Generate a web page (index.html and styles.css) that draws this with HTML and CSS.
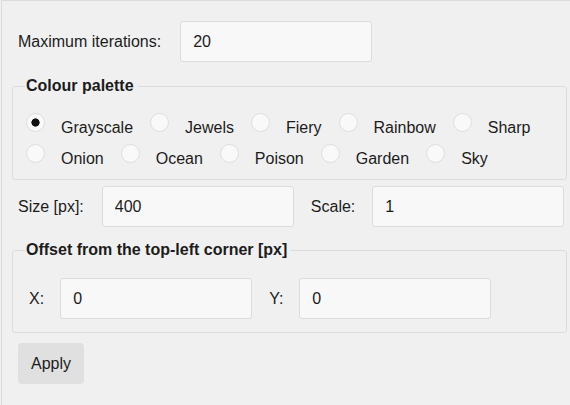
FILE: index.html
```html
<!DOCTYPE html>
<html lang="en">
<head>
<meta charset="utf-8">
<title>Fractal settings</title>
<link rel="stylesheet" href="styles.css">
</head>
<body>
<div class="app">
  <div class="row">
    <label class="lbl lbl-iter" for="iter">Maximum iterations:</label>
    <input id="iter" class="field" type="text" value="20">
  </div>

  <fieldset class="group palette">
    <legend>Colour palette</legend>
    <div class="radio-row">
      <label class="opt"><input type="radio" name="pal" checked><span>Grayscale</span></label>
      <label class="opt"><input type="radio" name="pal"><span>Jewels</span></label>
      <label class="opt"><input type="radio" name="pal"><span>Fiery</span></label>
      <label class="opt"><input type="radio" name="pal"><span>Rainbow</span></label>
      <label class="opt"><input type="radio" name="pal"><span>Sharp</span></label>
    </div>
    <div class="radio-row">
      <label class="opt"><input type="radio" name="pal"><span>Onion</span></label>
      <label class="opt"><input type="radio" name="pal"><span>Ocean</span></label>
      <label class="opt"><input type="radio" name="pal"><span>Poison</span></label>
      <label class="opt"><input type="radio" name="pal"><span>Garden</span></label>
      <label class="opt"><input type="radio" name="pal"><span>Sky</span></label>
    </div>
  </fieldset>

  <div class="row row-size">
    <label class="lbl lbl-size" for="size">Size [px]:</label>
    <input id="size" class="field" type="text" value="400">
    <label class="lbl lbl-next" for="scale">Scale:</label>
    <input id="scale" class="field" type="text" value="1">
  </div>

  <fieldset class="group offset">
    <legend>Offset from the top-left corner [px]</legend>
    <div class="row row-offset">
      <label class="lbl" for="ox">X:</label>
      <input id="ox" class="field" type="text" value="0">
      <label class="lbl lbl-next" for="oy">Y:</label>
      <input id="oy" class="field" type="text" value="0">
    </div>
  </fieldset>

  <button class="apply" type="button">Apply</button>
</div>
</body>
</html>
```

FILE: styles.css
```css
html, body {
  margin: 0;
  background: #f0f0f0;
}

body {
  font-family: "Liberation Sans", Arial, Helvetica, sans-serif;
  font-size: 16px;
  color: #1c1c1c;
}

.app {
  box-sizing: border-box;
  min-height: 405px;
  margin-left: 1px;
  border-top: 1px solid #dcdcdc;
  border-left: 1px solid #dcdcdc;
  padding: 20px 3px 0 10px;
}

.row {
  display: flex;
  align-items: center;
  gap: 16px;
  padding-left: 6px;
}

.lbl {
  line-height: 20px;
}

.lbl-iter {
  margin-right: 3px;
}

.lbl-size {
  margin-right: 2px;
}

.lbl-next {
  margin-left: 1px;
}

.row-size .lbl-next {
  margin-right: 1px;
}

.field {
  box-sizing: border-box;
  width: 192px;
  height: 41px;
  margin: 0;
  padding: 0 12px;
  border: 1px solid #dcdcdc;
  border-radius: 3px;
  background: #f8f8f8;
  font: inherit;
  color: inherit;
  outline: none;
}

.group {
  margin: 0;
  padding: 0 12px 10px;
  border: 1px solid #dcdcdc;
  border-radius: 3px;
}

.group legend {
  padding: 0 4px 0 1px;
  font-weight: bold;
  line-height: 20px;
}

.palette {
  margin-top: 14px;
}

.radio-row {
  display: flex;
  padding-left: 1px;
}

.radio-row:first-of-type {
  margin-top: 17px;
}

.radio-row + .radio-row {
  margin-top: 6px;
}

.opt {
  display: flex;
  align-items: flex-start;
  margin-right: 17px;
  line-height: 20px;
}

.opt span {
  padding-top: 5px;
  margin-left: 16px;
}

.opt input {
  appearance: none;
  -webkit-appearance: none;
  box-sizing: border-box;
  width: 19px;
  height: 19px;
  margin: 0;
  border: 1px solid #dedede;
  border-radius: 50%;
  background: #f9f9f9;
}

.opt input:checked {
  background: radial-gradient(circle, #111 0 3.8px, #f9f9f9 4.4px);
}

.row-size {
  margin-top: 6px;
}

.offset {
  margin-top: 13px;
  padding-bottom: 13px;
}

.row-offset {
  margin-top: 18px;
  padding-left: 4px;
}

.apply {
  display: block;
  box-sizing: border-box;
  height: 41px;
  margin: 10px 0 0 6px;
  padding: 0 13px;
  border: none;
  border-radius: 4px;
  background: #e0e0e0;
  font: inherit;
  color: inherit;
}
```
